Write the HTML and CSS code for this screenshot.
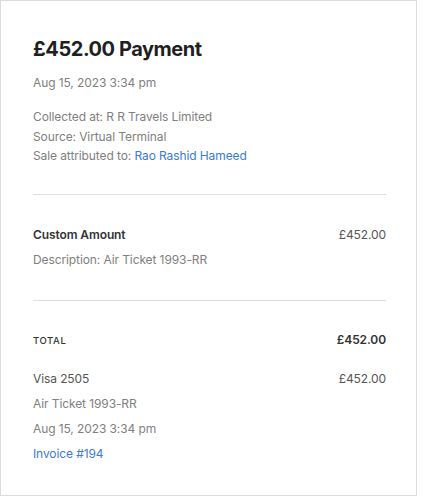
FILE: index.html
```html
<!DOCTYPE html>
<html>
<head>
<meta charset="utf-8">
<link rel="stylesheet" href="styles.css">
</head>
<body>
<div class="card">
  <h1 class="title">£452.00 Payment</h1>
  <div class="date">Aug 15, 2023 3:34 pm</div>
  <div class="meta">
    <div>Collected at: R R Travels Limited</div>
    <div>Source: Virtual Terminal</div>
    <div>Sale attributed to: <a class="link">Rao Rashid Hameed</a></div>
  </div>
  <hr class="divider">
  <div class="item">
    <div class="row"><span class="item-name">Custom Amount</span><span class="amount">£452.00</span></div>
    <div class="muted">Description: Air Ticket 1993-RR</div>
  </div>
  <hr class="divider">
  <div class="totals">
    <div class="row total-row"><span class="total-label">TOTAL</span><span class="total-amount">£452.00</span></div>
    <div class="tender">
      <div class="row"><span class="dark">Visa 2505</span><span class="amount">£452.00</span></div>
      <div class="muted">Air Ticket 1993-RR</div>
      <div class="muted">Aug 15, 2023 3:34 pm</div>
      <div><a class="link">Invoice #194</a></div>
    </div>
  </div>
</div>
</body>
</html>
```
FILE: styles.css
```css
* { box-sizing: border-box; }
body {
  margin: 0;
  background: #fff;
  font-family: Inter, "Noto Sans", sans-serif;
  font-size: 12px;
  letter-spacing: -0.1px;
  color: #808080;
}
.card {
  width: 417px;
  height: 496px;
  border: 1px solid #dcdcdc;
  padding: 36px 30px 0 32px;
}
.title {
  margin: 0;
  font-size: 20px;
  line-height: 24px;
  font-weight: 700;
  color: #1f1f1f;
  letter-spacing: -0.45px;
}
.date {
  margin-top: 13px;
  line-height: 18px;
}
.meta {
  margin-top: 15px;
  line-height: 19.5px;
}
.link {
  color: #3a7bd5;
  text-decoration: none;
}
.divider {
  border: 0;
  border-top: 1px solid #dedede;
  margin: 28px 0 0;
  height: 0;
}
.item {
  padding-top: 31px;
  padding-bottom: 31px;
  display: flex;
  flex-direction: column;
  gap: 7px;
  line-height: 18px;
}
.item + .divider { margin-top: 0; }
.row {
  display: flex;
  justify-content: space-between;
  align-items: baseline;
}
.item-name {
  font-weight: 600;
  color: #333;
}
.amount {
  color: #555;
}
.dark { color: #555; }
.totals {
  padding-top: 30px;
  line-height: 18px;
}
.total-label {
  font-size: 9.5px;
  font-weight: 500;
  letter-spacing: 0.6px;
  color: #333;
}
.total-amount {
  font-weight: 600;
  color: #333;
}
.tender {
  margin-top: 20px;
  display: flex;
  flex-direction: column;
  gap: 7px;
}
```
